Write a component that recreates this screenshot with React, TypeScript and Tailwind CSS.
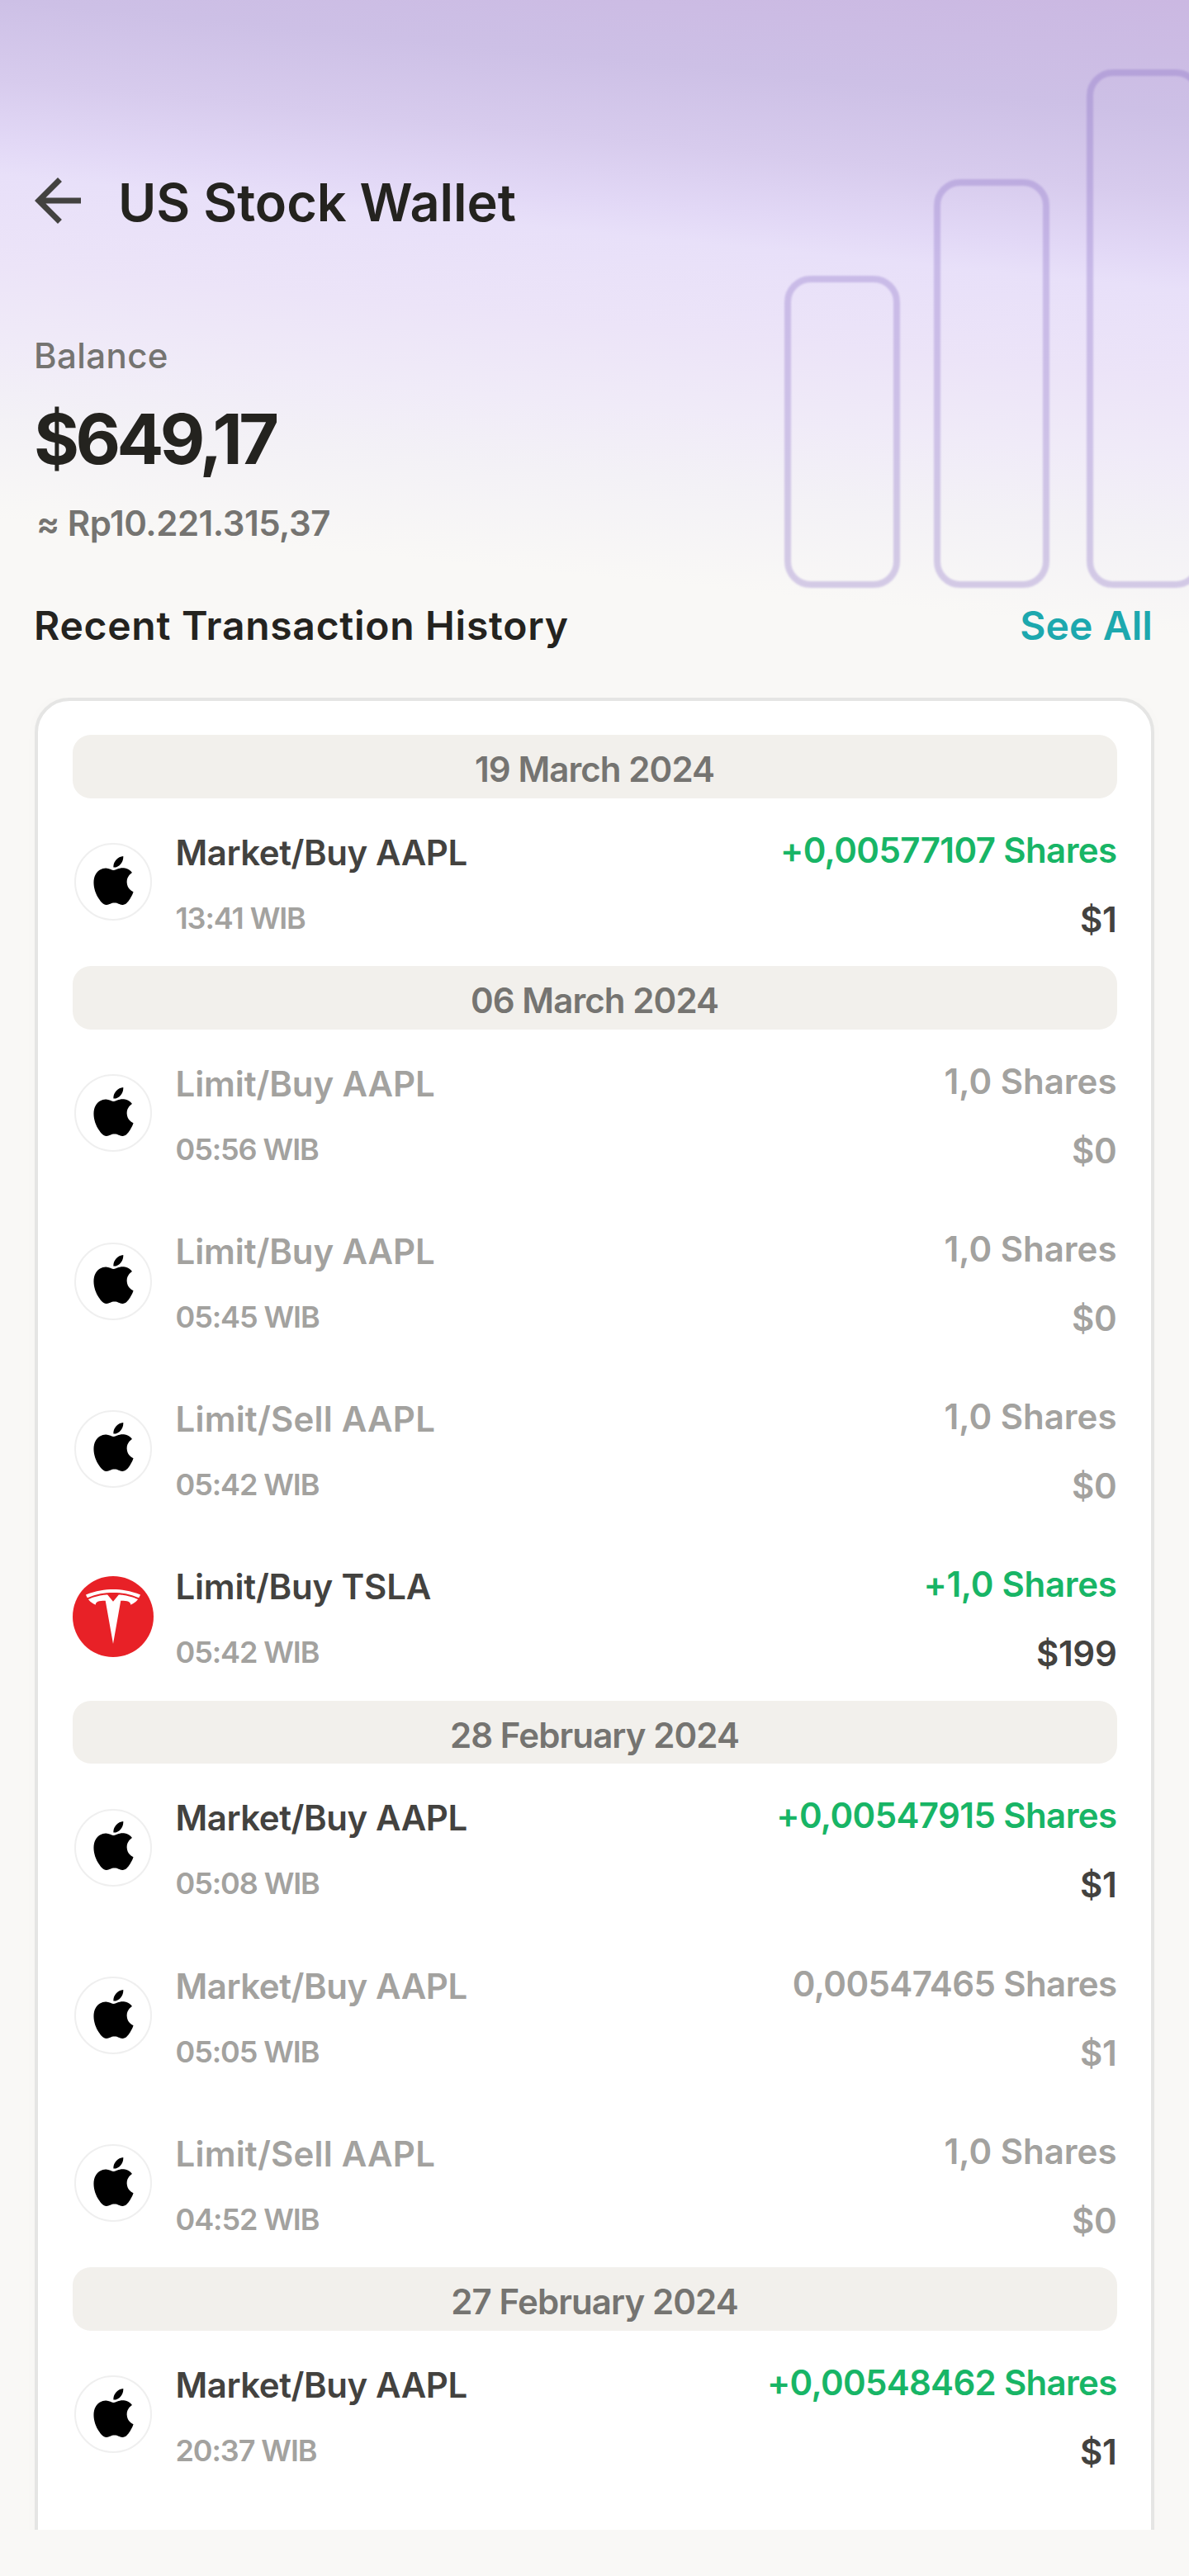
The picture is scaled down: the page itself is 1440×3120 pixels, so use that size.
import { SiApple, SiTesla } from "react-icons/si";

type Ticker = "AAPL" | "TSLA";

interface Transaction {
  ticker: Ticker;
  title: string;
  titleTracking: string;
  time: string;
  shares: string;
  sharesTracking: string;
  amount: string;
  filled: boolean;
}

interface DayGroup {
  date: string;
  items: Transaction[];
}

const MARKET_BUY = { title: "Market/Buy AAPL", titleTracking: "tracking-[-0.45px]", ticker: "AAPL" as Ticker };
const LIMIT_BUY = { title: "Limit/Buy AAPL", titleTracking: "tracking-[-0.1px]", ticker: "AAPL" as Ticker };
const LIMIT_SELL = { title: "Limit/Sell AAPL", titleTracking: "tracking-[0.2px]", ticker: "AAPL" as Ticker };
const LIMIT_BUY_TSLA = { title: "Limit/Buy TSLA", titleTracking: "tracking-[-0.2px]", ticker: "TSLA" as Ticker };

const ONE_SHARE = { shares: "1,0 Shares", sharesTracking: "tracking-[0px]", amount: "$0", filled: false };
const LONG = "tracking-[-0.6px]";

const groups: DayGroup[] = [
  {
    date: "19 March 2024",
    items: [
      { ...MARKET_BUY, time: "13:41 WIB", shares: "+0,00577107 Shares", sharesTracking: LONG, amount: "$1", filled: true },
    ],
  },
  {
    date: "06 March 2024",
    items: [
      { ...LIMIT_BUY, time: "05:56 WIB", ...ONE_SHARE },
      { ...LIMIT_BUY, time: "05:45 WIB", ...ONE_SHARE },
      { ...LIMIT_SELL, time: "05:42 WIB", ...ONE_SHARE },
      { ...LIMIT_BUY_TSLA, time: "05:42 WIB", shares: "+1,0 Shares", sharesTracking: "tracking-[-0.3px]", amount: "$199", filled: true },
    ],
  },
  {
    date: "28 February 2024",
    items: [
      { ...MARKET_BUY, time: "05:08 WIB", shares: "+0,00547915 Shares", sharesTracking: LONG, amount: "$1", filled: true },
      { ...MARKET_BUY, time: "05:05 WIB", shares: "0,00547465 Shares", sharesTracking: LONG, amount: "$1", filled: false },
      { ...LIMIT_SELL, time: "04:52 WIB", ...ONE_SHARE },
    ],
  },
  {
    date: "27 February 2024",
    items: [
      { ...MARKET_BUY, time: "20:37 WIB", shares: "+0,00548462 Shares", sharesTracking: "tracking-[-0.7px]", amount: "$1", filled: true },
    ],
  },
];

function TickerLogo({ ticker }: { ticker: Ticker }) {
  if (ticker === "TSLA") {
    return (
      <div className="flex size-[98px] shrink-0 items-center justify-center rounded-full bg-[#e82127]">
        <SiTesla className="size-[66px] text-white" />
      </div>
    );
  }
  return (
    <div className="m-[2px] flex size-[94px] shrink-0 items-center justify-center rounded-full border-2 border-[#efefef] bg-white">
      <SiApple className="-mt-[4px] ml-[2px] size-[59px] text-black" />
    </div>
  );
}

function TransactionRow({ item }: { item: Transaction }) {
  return (
    <div className="flex h-[203.2px] items-center">
      <TickerLogo ticker={item.ticker} />
      <div className="ml-[27px] flex h-full flex-col pt-[36px]">
        <span className={`text-[42px] leading-[60px] font-semibold ${item.titleTracking} ${item.filled ? "text-[#43423f]" : "text-[#a3a29f]"}`}>
          {item.title}
        </span>
        <span className="mt-[24px] text-[36px] leading-[50px] font-semibold tracking-[-1.1px] text-[#a3a29f]">
          {item.time}
        </span>
      </div>
      <div className="ml-auto flex h-full flex-col items-end pt-[33px]">
        <span className={`text-[42px] leading-[60px] font-semibold ${item.sharesTracking} ${item.filled ? "text-[#18b566]" : "text-[#a3a29f]"}`}>
          {item.shares}
        </span>
        <span className={`mt-[24px] text-[42px] leading-[60px] font-semibold tracking-[-0.3px] ${item.filled ? "text-[#43423f]" : "text-[#a3a29f]"}`}>
          {item.amount}
        </span>
      </div>
    </div>
  );
}

/* Faint rising bars behind the header. */
function HeaderBars() {
  return (
    <div className="absolute top-0 left-[950px] flex h-[712px] items-end opacity-30 blur-[1px]">
      <div className="h-[378px] w-[140px] shrink-0 rounded-[32px] border-[8px] border-[#8165c1]" />
      <div className="ml-[41px] h-[495px] w-[140px] shrink-0 rounded-[32px] border-[8px] border-[#8165c1]" />
      <div className="ml-[45px] h-[628px] w-[140px] shrink-0 rounded-[32px] border-[8px] border-[#8165c1]" />
    </div>
  );
}

export default function App() {
  return (
    <div className="h-[3120px] w-[1440px] overflow-hidden bg-[#f9f8f6] font-['Inter',sans-serif]">
      <header className="relative h-[845px] overflow-hidden bg-[linear-gradient(185.55deg,#cbb8e2_0px,#cdc0e6_139px,#d7cbed_235px,#e2d8f6_310px,#e8e0f9_350px,#ece4f8_460px,#f0ebf8_557px,#f3f1f6_640px,#f9f8f6_765px)] pt-[201px]">
        <HeaderBars />
        <div className="relative flex h-[84px] pl-[28px]">
          <svg viewBox="0 0 24 24" className="size-[84px] fill-[#434240]">
            <path d="M20 11H7.83l5.59-5.59L12 4l-8 8 8 8 1.41-1.41L7.83 13H20z" />
          </svg>
          <h1 className="mt-[4px] ml-[31px] text-[63px] leading-[80px] font-semibold text-[#24231f]">
            US Stock Wallet
          </h1>
        </div>
        <div className="relative flex flex-col pt-[116px] pl-[41px]">
          <span className="text-[42px] leading-[60px] font-medium tracking-[0.4px] text-[#757471]">Balance</span>
          <span className="mt-[21px] text-[84px] leading-[100px] font-bold tracking-[-4.5px] text-[#24231f]">$649,17</span>
          <span className="mt-[22px] ml-[3px] text-[42px] leading-[60px] font-semibold tracking-[-0.5px] text-[#757471]">
            ≈ Rp10.221.315,37
          </span>
        </div>
        <div className="relative mt-[64px] flex justify-between pr-[44px] pl-[41px] text-[48px] leading-[60px] font-semibold">
          <h2 className="tracking-[0.72px] text-[#24231f]">Recent Transaction History</h2>
          <span className="tracking-[0.1px] text-[#1da8ae]">See All</span>
        </div>
      </header>

      <main className="h-[2219px] overflow-hidden px-[42px]">
        <section className="h-[2300px] rounded-t-[42px] border-4 border-[#e5e5e4] bg-white px-[41.5px] pt-[41px] shadow-[0_0_16px_rgba(0,0,0,0.02)]">
          {groups.map((group) => (
            <div key={group.date}>
              <div className="h-[76.8px] rounded-[22px] bg-[#f2f0ec] pt-[12px] text-center text-[42px] leading-[60px] font-semibold tracking-[-0.9px] text-[#757471]">
                {group.date}
              </div>
              {group.items.map((item) => (
                <TransactionRow key={item.time + item.title} item={item} />
              ))}
            </div>
          ))}
        </section>
      </main>
    </div>
  );
}
